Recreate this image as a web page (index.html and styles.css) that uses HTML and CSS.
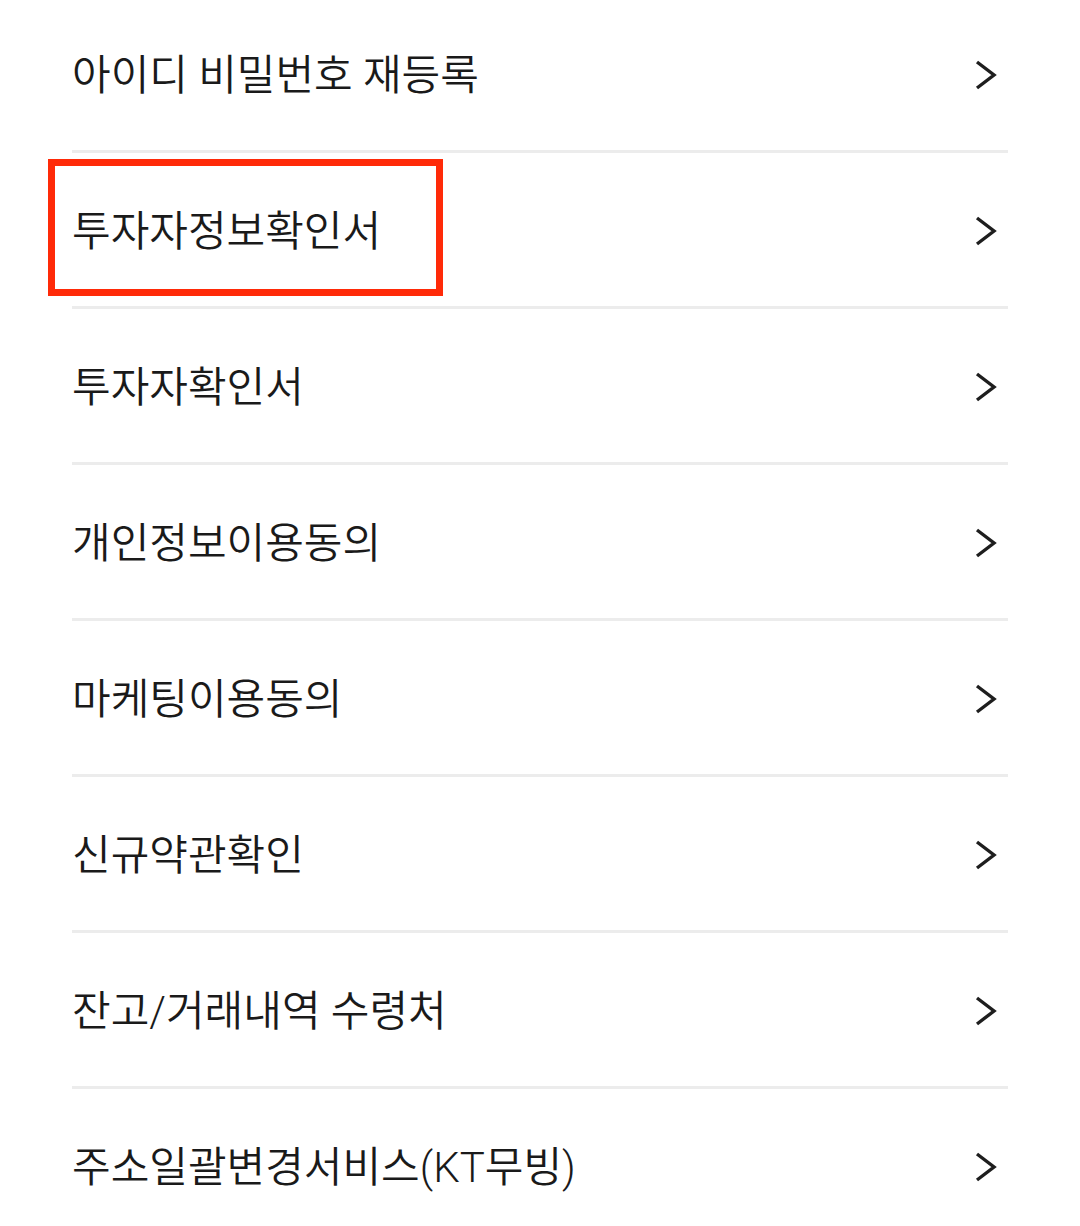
FILE: index.html
```html
<!DOCTYPE html>
<html lang="ko">
<head>
<meta charset="utf-8">
<link rel="stylesheet" href="styles.css">
</head>
<body>
<ul class="menu">
  <li class="item"><span class="label">아이디 비밀번호 재등록</span><svg class="chev" viewBox="0 0 24 32"><path d="M3 3 L20 16 L3 29"/></svg></li>
  <li class="item highlighted"><span class="label">투자자정보확인서</span><svg class="chev" viewBox="0 0 24 32"><path d="M3 3 L20 16 L3 29"/></svg><span class="mark"></span></li>
  <li class="item"><span class="label">투자자확인서</span><svg class="chev" viewBox="0 0 24 32"><path d="M3 3 L20 16 L3 29"/></svg></li>
  <li class="item"><span class="label">개인정보이용동의</span><svg class="chev" viewBox="0 0 24 32"><path d="M3 3 L20 16 L3 29"/></svg></li>
  <li class="item"><span class="label">마케팅이용동의</span><svg class="chev" viewBox="0 0 24 32"><path d="M3 3 L20 16 L3 29"/></svg></li>
  <li class="item"><span class="label">신규약관확인</span><svg class="chev" viewBox="0 0 24 32"><path d="M3 3 L20 16 L3 29"/></svg></li>
  <li class="item"><span class="label">잔고/거래내역 수령처</span><svg class="chev" viewBox="0 0 24 32"><path d="M3 3 L20 16 L3 29"/></svg></li>
  <li class="item"><span class="label">주소일괄변경서비스(KT무빙)</span><svg class="chev" viewBox="0 0 24 32"><path d="M3 3 L20 16 L3 29"/></svg></li>
</ul>
</body>
</html>
```
FILE: styles.css
```css
html, body {
  margin: 0;
  padding: 0;
  background: #ffffff;
}
body {
  width: 1080px;
  height: 1226px;
  overflow: hidden;
  font-family: Roboto, "Noto Sans CJK KR", sans-serif;
  color: #1a1a1a;
}
.menu {
  list-style: none;
  margin: -3px 72px 0 72px;
  padding: 0;
}
.item {
  position: relative;
  height: 153px;
  display: flex;
  align-items: center;
  justify-content: space-between;
  border-bottom: 3px solid #ececec;
}
.label {
  font-size: 42px;
  font-weight: 350;
  line-height: 1;
  padding-top: 5px;
  padding-left: 0;
  letter-spacing: 0;
}
.chev {
  width: 24px;
  height: 32px;
  margin-right: 10px;
  margin-top: 3px;
  fill: none;
  stroke: #1e1e1e;
  stroke-width: 3.4;
  stroke-linecap: butt;
  stroke-linejoin: miter;
}
.mark {
  position: absolute;
  left: -24px;
  top: 6px;
  width: 381px;
  height: 123px;
  border: 7px solid #ff2a08;
}
```
